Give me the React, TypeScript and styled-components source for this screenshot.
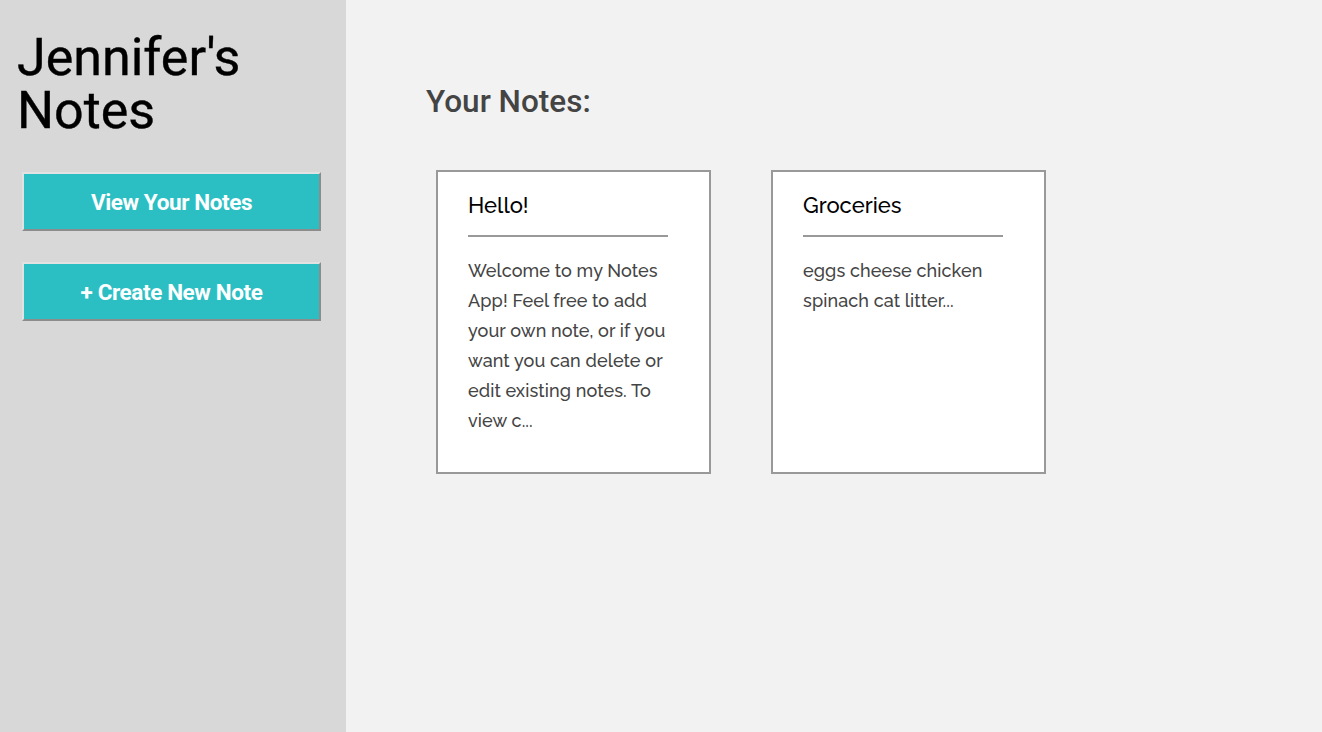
import React from 'react'
import styled, { createGlobalStyle } from 'styled-components'

const notes = [
  {
    title: 'Hello!',
    body:
      'Welcome to my Notes App! Feel free to add your own note, or if you want you can delete or edit existing notes. To view c...',
  },
  { title: 'Groceries', body: 'eggs cheese chicken spinach cat litter...' },
]

const App = () => {
  return (
    <>
      <GlobalStyle />
      <Layout>
        <Sidebar>
          <Brand>Jennifer's Notes</Brand>
          <NavButton>View Your Notes</NavButton>
          <NavButton>+ Create New Note</NavButton>
        </Sidebar>
        <Main>
          <Heading>Your Notes:</Heading>
          <Cards>
            {notes.map(note => (
              <Card key={note.title}>
                <CardTitle>{note.title}</CardTitle>
                <Rule />
                <CardBody>{note.body}</CardBody>
              </Card>
            ))}
          </Cards>
        </Main>
      </Layout>
    </>
  )
}

const GlobalStyle = createGlobalStyle`
  html, body {
    margin: 0;
    padding: 0;
    height: 100%;
  }
  body {
    font-family: Roboto, 'Liberation Sans', sans-serif;
  }
`

const Layout = styled.div`
  display: grid;
  grid-template-columns: 346px 1fr;
  min-height: 732px;
`

const Sidebar = styled.aside`
  background: #d8d8d8;
  padding: 31px 25px 0 22px;
  display: flex;
  flex-direction: column;
  align-items: flex-start;
`

const Brand = styled.h1`
  font-family: Roboto, 'Liberation Sans', sans-serif;
  font-weight: 400;
  font-size: 52px;
  line-height: 53px;
  margin: 0 0 35px -5px;
  color: #000;
  -webkit-text-stroke: 0.4px #000;
`

const NavButton = styled.button`
  width: 299px;
  height: 59px;
  margin-bottom: 31px;
  padding: 0;
  background: #2bbfc4;
  color: #fff;
  font-family: Roboto, 'Liberation Sans', sans-serif;
  font-weight: 700;
  font-size: 22.5px;
  letter-spacing: -0.4px;
  border: 2px solid;
  border-color: #e2e2e2 #8c8c8c #8c8c8c #e2e2e2;
  cursor: pointer;
`

const Main = styled.main`
  background: #f2f2f2;
  padding: 82px 0 0 80px;
`

const Heading = styled.h2`
  font-family: Roboto, 'Liberation Sans', sans-serif;
  font-weight: 500;
  font-size: 31.5px;
  line-height: 40px;
  color: #444;
  margin: 0 0 48px 0;
`

const Cards = styled.div`
  display: flex;
  gap: 60px;
  padding-left: 10px;
`

const Card = styled.div`
  width: 275px;
  height: 304px;
  background: #fff;
  border: 2px solid #999;
  padding: 19px 30px 0 30px;
  box-sizing: border-box;
`

const CardTitle = styled.h3`
  font-family: Raleway, Lato, 'Open Sans', sans-serif;
  font-weight: 500;
  font-size: 22px;
  line-height: 28px;
  margin: 0;
  color: #000;
`

const Rule = styled.hr`
  width: 200px;
  margin: 16px 0 19px 0;
  border: none;
  border-top: 2px solid #999;
`

const CardBody = styled.p`
  font-family: Raleway, Lato, 'Open Sans', sans-serif;
  font-weight: 500;
  font-size: 18px;
  line-height: 30px;
  color: #444;
  margin: 0;
  letter-spacing: 0.1px;
`

export default App
